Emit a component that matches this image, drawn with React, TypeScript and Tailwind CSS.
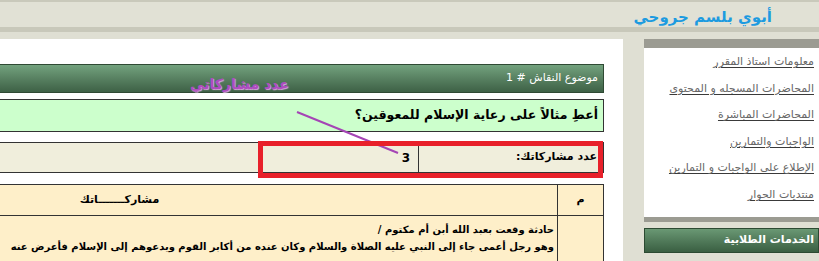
const links = [
  'معلومات استاذ المقرر',
  'المحاضرات المسجله و المحتوى',
  'المحاضرات المباشرة',
  'الواجبات والتمارين',
  'الإطلاع على الواجبات و التمارين',
  'منتديات الحوار',
];

export default function App() {
  return (
    <div
      dir="rtl"
      className="relative h-[261px] w-[819px] overflow-hidden bg-white font-['DejaVu_Sans',sans-serif]"
    >
      {/* top banner */}
      <div className="h-[2px] bg-[#c9c9bb]" />
      <div className="flex h-[25px] items-center bg-[#e1e1d5] pt-[6px] pr-[47px]">
        <h1 className="text-[15px] leading-none font-bold text-[#1d9be0]">
          أبوي بلسم جروحي
        </h1>
      </div>
      <div className="h-[5px] bg-[#c8c8ba]" />
      <div className="h-[7px] bg-[#dfdfd3]" />

      <div className="flex h-[222px]">
        {/* sidebar */}
        <aside className="w-[196px] shrink-0 bg-[#dfdfd3] pl-[21px]">
          <div className="h-[9px] bg-[#9b9b92]" />
          <ul className="border-b-[5px] border-[#9b9b92] bg-white pt-[1px] pb-[8px] pr-[5px]">
            {links.map((l) => (
              <li key={l} className="h-[26.6px] text-[11px] leading-[26.6px]">
                <a className="text-[#666] underline decoration-[#3a3a3a] underline-offset-2">
                  {l}
                </a>
              </li>
            ))}
          </ul>
          <div className="mt-[6px] flex h-[25px] items-center border border-[#2c4a32] bg-linear-to-b from-[#6a9874] to-[#3a5f42] pr-[4px] text-[11px] font-bold text-white">
            الخدمات الطلابية
          </div>
        </aside>

        {/* main */}
        <main className="w-[623px] shrink-0 overflow-hidden pt-[25px] pr-[19px]">
          <div className="w-[923px]">
            <div className="flex h-[29px] items-center border border-[#2f4a34] bg-linear-to-b from-[#73a27e] to-[#3e6146] pr-[5px] text-[11px] text-white">
              موضوع النقاش # 1
            </div>
            <div className="mt-[6px] flex h-[33px] items-center border border-[#333] bg-[#ccffcc] pr-[5px] text-[12.5px] font-bold text-black">
              أعطِ مثالاً على رعاية الإسلام للمعوقين؟
            </div>
            <div className="mt-[10px] flex h-[31px] border border-[#333] bg-[#f0eedc] text-[11px] font-bold text-black">
              <div className="flex w-[185px] items-center border-l border-[#333] pr-[6px]">
                عدد مشاركاتك:
              </div>
              <div className="flex flex-1 items-center pr-[8px] text-[12px]">3</div>
            </div>
            <div className="mt-[11px] border border-[#333] bg-[#feefc9] text-black">
              <div className="flex h-[31px] border-b border-[#333] text-[11px] font-bold">
                <div className="flex w-[46px] items-center justify-center border-l border-[#333]">
                  م
                </div>
                <div className="flex flex-1 items-center justify-center">
                  مشاركـــــــاتك
                </div>
              </div>
              <div className="flex h-[60px] text-[10px] font-bold">
                <div className="w-[46px] border-l border-[#333]" />
                <div className="flex-1 pt-[5px] pr-[3px] leading-[17px] whitespace-nowrap">
                  <p>حادثة وقعت بعبد الله أبن أم مكتوم /</p>
                  <p>
                    وهو رجل أعمى جاء إلى النبي عليه الصلاة والسلام وكان عنده من أكابر القوم ويدعوهم إلى الإسلام فأعرض عنه
                  </p>
                </div>
              </div>
            </div>
          </div>
        </main>
      </div>

      {/* annotation overlay */}
      <span className="absolute top-[74px] left-[190px] text-[14px] font-bold text-[#b04cc0] [text-shadow:1px_1px_1px_#d9a4de]">
        عدد مشاركاتي
      </span>
      <svg className="absolute top-0 left-0" width="819" height="261">
        <line x1="297" y1="112" x2="398" y2="153" stroke="#a545b5" strokeWidth="2" />
      </svg>
      <div className="absolute top-[141px] left-[258px] h-[37px] w-[345px] border-[5px] border-[#e8202a]" />
    </div>
  );
}
